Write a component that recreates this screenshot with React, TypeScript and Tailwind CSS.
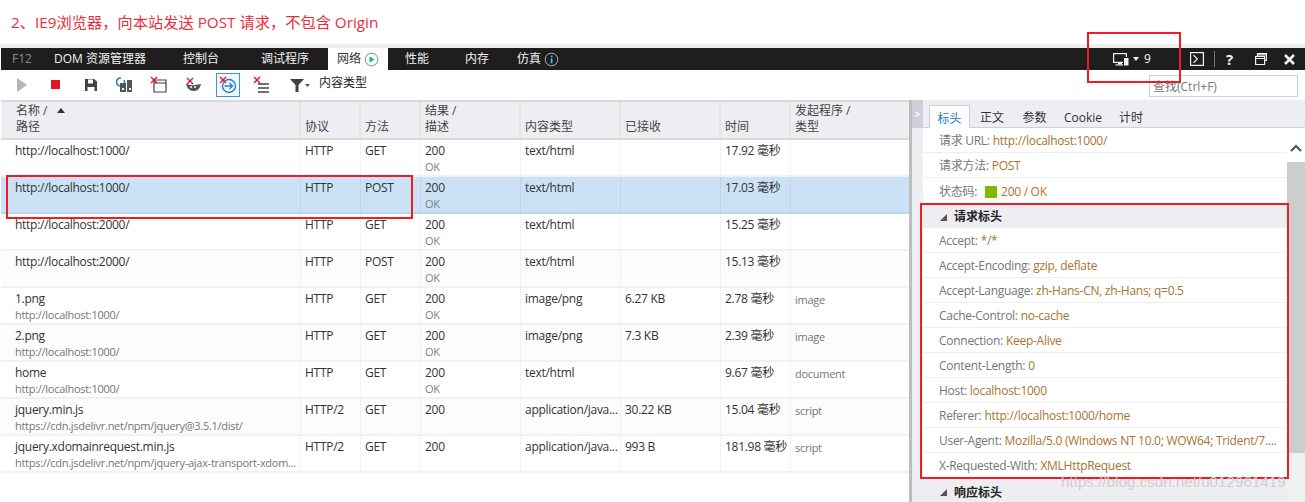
import React from "react";

const FONT = '"Open Sans","Noto Sans CJK SC",sans-serif';

const cols = ["w-[300px]", "w-[60px]", "w-[60px]", "w-[100px]", "w-[100px]", "w-[100px]", "w-[70px]", "flex-1"];

type Row = {
  name: string; path?: string; proto: string; method: string; status: string; desc?: string;
  type: string; size?: string; time: string; init?: string;
};

const rows: Row[] = [
  { name: "http://localhost:1000/", proto: "HTTP", method: "GET", status: "200", desc: "OK", type: "text/html", time: "17.92 毫秒" },
  { name: "http://localhost:1000/", proto: "HTTP", method: "POST", status: "200", desc: "OK", type: "text/html", time: "17.03 毫秒" },
  { name: "http://localhost:2000/", proto: "HTTP", method: "GET", status: "200", desc: "OK", type: "text/html", time: "15.25 毫秒" },
  { name: "http://localhost:2000/", proto: "HTTP", method: "POST", status: "200", desc: "OK", type: "text/html", time: "15.13 毫秒" },
  { name: "1.png", path: "http://localhost:1000/", proto: "HTTP", method: "GET", status: "200", desc: "OK", type: "image/png", size: "6.27 KB", time: "2.78 毫秒", init: "image" },
  { name: "2.png", path: "http://localhost:1000/", proto: "HTTP", method: "GET", status: "200", desc: "OK", type: "image/png", size: "7.3 KB", time: "2.39 毫秒", init: "image" },
  { name: "home", path: "http://localhost:1000/", proto: "HTTP", method: "GET", status: "200", desc: "OK", type: "text/html", time: "9.67 毫秒", init: "document" },
  { name: "jquery.min.js", path: "https://cdn.jsdelivr.net/npm/jquery@3.5.1/dist/", proto: "HTTP/2", method: "GET", status: "200", type: "application/java...", size: "30.22 KB", time: "15.04 毫秒", init: "script" },
  { name: "jquery.xdomainrequest.min.js", path: "https://cdn.jsdelivr.net/npm/jquery-ajax-transport-xdom...", proto: "HTTP/2", method: "GET", status: "200", type: "application/java...", size: "993 B", time: "181.98 毫秒", init: "script" },
];

const headers: [string, string?][] = [
  ["协议"], ["方法"], ["结果 /", "描述"], ["内容类型"], ["已接收"], ["时间"], ["发起程序 /", "类型"],
];

const headerRows: [string, string][] = [
  ["Accept:", "*/*"],
  ["Accept-Encoding:", "gzip, deflate"],
  ["Accept-Language:", "zh-Hans-CN, zh-Hans; q=0.5"],
  ["Cache-Control:", "no-cache"],
  ["Connection:", "Keep-Alive"],
  ["Content-Length:", "0"],
  ["Host:", "localhost:1000"],
  ["Referer:", "http://localhost:1000/home"],
  ["User-Agent:", "Mozilla/5.0 (Windows NT 10.0; WOW64; Trident/7...."],
  ["X-Requested-With:", "XMLHttpRequest"],
];

const RedX = () => (
  <g stroke="#e81123" strokeWidth="1.4" fill="none">
    <path d="M1 1l6 6M7 1l-6 6" />
  </g>
);

const Ico = ({ children, active, cls }: { children: React.ReactNode; active?: boolean; cls?: string }) => (
  <div className={`w-[24px] h-[24px] flex items-center justify-center shrink-0 ${cls ?? ""} ${active ? "border border-[#3e94e4] bg-[#f4f9fe]" : ""}`}>
    <svg width="20" height="20" viewBox="0 0 20 20">{children}</svg>
  </div>
);

function Tab({ t, cls }: { t: string; cls: string }) {
  return <span className={`text-[#f2f2f2] whitespace-nowrap ${cls}`}>{t}</span>;
}

function HeaderRow({ k, v }: { k: string; v: string }) {
  return (
    <div className="h-[25px] border-b border-[#eeeeee] pl-[16px] pt-[2px] flex items-center whitespace-nowrap text-[12px]">
      <span className="text-[#767676]">{k}</span>
      <span className="text-[#aa7430] ml-[3px]">{v}</span>
    </div>
  );
}

export default function App() {
  return (
    <div className="relative w-[1305px] h-[502px] overflow-hidden bg-white text-[12px] leading-[16px] text-[#333]" style={{ fontFamily: FONT }}>
      {/* Title */}
      <div className="h-[44px] pl-[11px] pt-[11px] text-[15.25px] leading-[22px] text-[#ee2c3c]">
        2、IE9浏览器，向本站发送 POST 请求，不包含 Origin
      </div>
      <div className="h-[4px] bg-[#eeeeee]" />

      {/* Dark tab bar */}
      <div className="h-[22px] ml-[1px] bg-[#1e1e1e] flex items-center">
        <span className="ml-[11px] w-[42px] text-[#8a8a8a]">F12</span>
        <Tab t="DOM 资源管理器" cls="w-[129px]" />
        <Tab t="控制台" cls="w-[78px]" />
        <Tab t="调试程序" cls="w-[67px]" />
        <div className="h-[22px] w-[60px] bg-white flex items-center pl-[9px] text-[#333]">
          网络
          <svg className="ml-[3px]" width="15" height="15" viewBox="0 0 15 15">
            <circle cx="7.5" cy="7.5" r="6.3" fill="none" stroke="#8a8a8a" />
            <path d="M5.5 4.2l5 3.3-5 3.3z" fill="#14b39a" />
          </svg>
        </div>
        <Tab t="性能" cls="ml-[17px] w-[60px]" />
        <Tab t="内存" cls="w-[52px]" />
        <Tab t="仿真" cls="" />
        <svg className="ml-[3px]" width="15" height="15" viewBox="0 0 15 15">
          <circle cx="7.5" cy="7.5" r="6.3" fill="none" stroke="#b5b5b5" />
          <rect x="6.7" y="6.3" width="1.8" height="5" fill="#3dbbe8" />
          <rect x="6.7" y="3.6" width="1.8" height="1.7" fill="#3dbbe8" />
        </svg>
        <div className="ml-auto flex items-center">
          <svg width="16" height="13" viewBox="0 0 16 13">
            <rect x="0.6" y="0.6" width="12.8" height="8.8" fill="none" stroke="#f2f2f2" strokeWidth="1.2" />
            <rect x="5" y="10" width="4" height="1.2" fill="#f2f2f2" />
            <rect x="2.500" y="11.300" width="8" height="1.200" fill="#f2f2f2" />
            <rect x="10.500" y="4.500" width="5.500" height="8.500" fill="#f2f2f2" stroke="#1e1e1e" />
          </svg>
          <svg className="ml-[4px]" width="6" height="4" viewBox="0 0 6 4"><path d="M0 0h6L3 4z" fill="#f2f2f2" /></svg>
          <span className="ml-[5px] mr-[37px] text-[#f2f2f2] w-[9px]">9</span>
          <svg width="14" height="14" viewBox="0 0 14 14">
            <rect x="0.6" y="0.6" width="12.8" height="12.8" fill="none" stroke="#f2f2f2" strokeWidth="1.2" />
            <path d="M3.500 3.200L7.300 7 3.500 10.800" fill="none" stroke="#f2f2f2" strokeWidth="1.200" />
          </svg>
          <div className="w-px h-[16px] bg-[#777] ml-[10px] mr-[11px]" />
          <span className="text-[#f2f2f2] text-[15px] font-bold w-[10px]">?</span>
          <svg className="ml-[19px]" width="12" height="12" viewBox="0 0 12 12">
            <path d="M2.500 3V.6h9V7.500H9.500M.6 3.500h9v8H.6zM.6 5.500h9M2.500 2h9" fill="none" stroke="#f2f2f2" strokeWidth="1.200" />
          </svg>
          <svg className="ml-[17px] mr-[10px]" width="11" height="11" viewBox="0 0 11 11">
            <path d="M1 1l9 9M10 1l-9 9" stroke="#f2f2f2" strokeWidth="2.600" />
          </svg>
        </div>
      </div>

      {/* Toolbar */}
      <div className="h-[30px] flex items-center relative">
        <div className="ml-[10px] flex items-center">
          <Ico><path d="M5 3l10 7-10 7z" fill="#b4b4b4" /></Ico>
          <Ico cls="ml-[10px]"><rect x="5" y="5" width="9" height="9" fill="#e81123" /></Ico>
          <Ico cls="ml-[11px]">
            <path d="M4 4h9l3 2.500V16H4z" fill="#424242" />
            <rect x="7" y="4.500" width="5" height="4" fill="#fff" />
            <rect x="6.500" y="12" width="7" height="4" fill="#fff" />
          </Ico>
          <Ico cls="ml-[10px]">
            <path d="M6 3a4 4 0 1 0 3 2" fill="none" stroke="#1e7fd0" strokeWidth="1.500" />
            <rect x="5" y="8" width="6" height="9" fill="#555" />
            <rect x="12" y="5" width="5" height="12" fill="#555" />
            <rect x="7" y="13" width="2" height="2" fill="#fff" />
            <rect x="14" y="13" width="2" height="2" fill="#fff" />
          </Ico>
          <Ico cls="ml-[10px]">
            <path d="M5 5h12v12H5zM5 8h12" fill="none" stroke="#424242" strokeWidth="1.200" />
            <g transform="translate(1 1)"><RedX /></g>
          </Ico>
          <Ico cls="ml-[10px]">
            <path d="M3 9c4 1.500 9 1.500 15 0-1 4.500-3.500 7-7.500 7S4 13 3 9z" fill="#555" />
            <circle cx="8" cy="12" r="1" fill="#fff" />
            <circle cx="12" cy="12" r="1" fill="#fff" />
            <g transform="translate(3 2)"><RedX /></g>
          </Ico>
          <Ico active cls="ml-[11px]">
            <circle cx="11" cy="11" r="6.500" fill="none" stroke="#1e7fd0" strokeWidth="1.400" />
            <path d="M6.500 11h8M11.500 8l3 3-3 3" fill="none" stroke="#1e7fd0" strokeWidth="1.400" />
            <g transform="translate(1 1)"><RedX /></g>
          </Ico>
          <Ico cls="ml-[9px]">
            <path d="M7 9h11M7 13h11M7 17h11" stroke="#424242" strokeWidth="1.400" />
            <g transform="translate(2 1)"><RedX /></g>
          </Ico>
        </div>
        <div className="ml-[17px] flex items-center">
          <svg width="14" height="13" viewBox="0 0 14 13"><path d="M0 0h14L8.500 6v7h-3V6z" fill="#424242" /></svg>
          <svg className="ml-[1px]" width="5" height="3" viewBox="0 0 5 3"><path d="M0 0h5L2.500 3z" fill="#555" /></svg>
          <span className="ml-[9px] text-[#222] -translate-y-[2px]">内容类型</span>
        </div>
        <div className="ml-auto mr-[7px] mt-[2px] w-[149px] h-[22px] border border-[#cfcfdc] pl-[3px] pt-[1px] text-[#777] flex items-center bg-white">查找(Ctrl+F)</div>
      </div>

      {/* Main */}
      <div className="flex h-[402px]">
        {/* Request list */}
        <div className="w-[909px] shrink-0 pl-[1px]">
          <div className="h-[40px] flex bg-[#eeeef2] border-y-2 border-[#d9d9d9] text-[#444]">
            <div className={`${cols[0]} border-r-2 border-[#e4e4e4] pl-[15px] flex flex-col justify-end pb-[3px]`}>
              <div>名称 /<svg className="inline ml-[9px] mb-[2px]" width="8" height="5" viewBox="0 0 8 5"><path d="M4 0l4 5H0z" fill="#333" /></svg></div>
              <div>路径</div>
            </div>
            {headers.map(([a, b], i) => (
              <div key={a} className={`${cols[i + 1]} border-r-2 last:border-r-0 border-[#e4e4e4] pl-[4px] flex flex-col justify-end pb-[3px]`}>
                <div>{a}</div>
                {b && <div>{b}</div>}
              </div>
            ))}
          </div>
          {rows.map((r, i) => {
            const sel = i === 1;
            const d = sel ? "border-[#bcd5e8]" : "border-[#f1f1f1]";
            const cell = `border-r ${sel ? "border-[#bcd5e8]" : "border-[#f1f1f1]"} pl-[4px] pt-[3px]`;
            return (
              <div key={i} className={`h-[37px] flex border-b-2 tracking-[-0.28px] ${d} ${sel ? "bg-[#cbe2f6]" : i % 2 ? "bg-[#fcfcfc]" : "bg-white"}`}>
                <div className={`${cols[0]} ${cell} pl-[14px]`}>
                  <div>{r.name}</div>
                  {r.path && <div className="text-[11px] leading-[15px] text-[#767676] whitespace-nowrap">{r.path}</div>}
                </div>
                <div className={`${cols[1]} ${cell}`}>{r.proto}</div>
                <div className={`${cols[2]} ${cell}`}>{r.method}</div>
                <div className={`${cols[3]} ${cell}`}>
                  <div>{r.status}</div>
                  {r.desc && <div className="text-[11px] leading-[15px] text-[#808080]">{r.desc}</div>}
                </div>
                <div className={`${cols[4]} ${cell} whitespace-nowrap`}>{r.type}</div>
                <div className={`${cols[5]} ${cell}`}>{r.size}</div>
                <div className={`${cols[6]} ${cell} whitespace-nowrap`}>{r.time}</div>
                <div className={`flex-1 pl-[4px] pt-[4px] text-[11px] text-[#767676]`}>{r.init}</div>
              </div>
            );
          })}
        </div>

        {/* Splitter */}
        <div className="w-[3px] bg-[#bdbdbd] shrink-0" />

        {/* Details */}
        <div className="flex-1 bg-[#eeeef2] flex flex-col min-w-0">
          <div className="h-[28px] flex border-b border-[#cfcfdc] shrink-0">
            <div className="w-[11px] h-[27px] bg-[#cfcfdc] text-white font-bold text-[10px] flex items-center justify-center">&gt;</div>
            <div className="flex items-end pl-[6px] text-[#333]">
              <div className="h-[23px] w-[41px] bg-white border border-b-0 border-[#cfcfdc] text-[#1b78c8] flex items-center justify-center -mb-px pt-[3px]">标头</div>
              <span className="w-[44px] text-center pb-[1px]">正文</span>
              <span className="w-[41px] text-center pb-[1px]">参数</span>
              <span className="w-[56px] text-center pb-[1px]">Cookie</span>
              <span className="w-[40px] text-center pb-[1px]">计时</span>
            </div>
          </div>
          <div className="flex flex-1 min-h-0">
            <div className="w-[11px] shrink-0" />
            <div className="w-[364px] shrink-0 flex flex-col bg-white tracking-[-0.28px]">
              <div className="h-[25px] border-b border-[#eeeeee] pl-[16px] pt-[1px] flex items-center whitespace-nowrap">
                <span className="text-[#767676]">请求 URL:</span><span className="ml-[3px] text-[#aa7430]">http://localhost:1000/</span>
              </div>
              <div className="h-[25px] border-b border-[#eeeeee] pl-[16px] pt-[2px] flex items-center">
                <span className="text-[#767676]">请求方法:</span><span className="ml-[3px] text-[#aa7430]">POST</span>
              </div>
              <div className="h-[26px] pl-[16px] pt-[1px] flex items-center">
                <span className="text-[#767676]">状态码:</span>
                <span className="ml-[8px] w-[12px] h-[12px] bg-[#82b800]" />
                <span className="ml-[4px] text-[#aa7430]">200 / OK</span>
              </div>
              <div className="h-[24px] bg-[#eeeef2] pl-[17px] pt-[2px] flex items-center font-bold text-[#222] shrink-0 tracking-normal">
                <svg className="mr-[7px]" width="7" height="7" viewBox="0 0 7 7"><path d="M7 0v7H0z" fill="#555" /></svg>
                请求标头
              </div>
              {headerRows.map(([k, v]) => <HeaderRow key={k} k={k} v={v} />)}
              <div className="flex-1 bg-[#eeeef2] pl-[17px] pt-[7px] font-bold text-[#222] flex items-start tracking-normal">
                <svg className="mr-[7px] mt-[4px]" width="7" height="7" viewBox="0 0 7 7"><path d="M7 0v7H0z" fill="#555" /></svg>
                响应标头
              </div>
            </div>
            <div className="flex-1 flex flex-col bg-[#f0f0f0]">
              <div className="h-[34px] bg-white flex items-center justify-center">
                <svg className="mt-[6px]" width="12" height="8" viewBox="0 0 12 8"><path d="M1 7l5-5 5 5" fill="none" stroke="#555" strokeWidth="2.200" /></svg>
              </div>
              <div className="h-[291px] bg-[#cdcdcd]" />
            </div>
          </div>
        </div>
      </div>

      {/* Annotations overlaid on the screenshot */}
      <div className="absolute left-[6px] top-[175px] w-[407px] h-[44px] border-2 border-[#ee1c25]" />
      <div className="absolute left-[1087px] top-[32px] w-[94px] h-[51px] border-2 border-[#ee1c25]" />
      <div className="absolute left-[920px] top-[203px] w-[369px] h-[276px] border-2 border-[#ee1c25]" />
      <div className="absolute left-[1061px] top-[472px] text-[15.2px] leading-[20px] text-[#cfcfcf] whitespace-nowrap" style={{ fontFamily: '"Liberation Sans",sans-serif' }}>https://blog.csdn.net/u012961419</div>
    </div>
  );
}
